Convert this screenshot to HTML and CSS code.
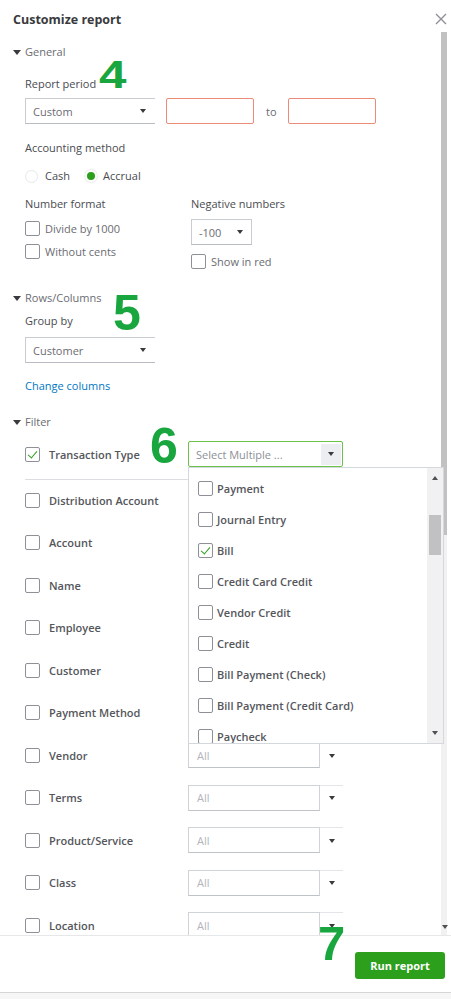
FILE: index.html
```html
<!DOCTYPE html>
<html lang="en">
<head>
  <meta charset="UTF-8" />
  <meta name="viewport" content="width=device-width, initial-scale=1.0" />
  <title>Customize report</title>
  <link rel="stylesheet" href="styles.css">
</head>
<body>
  <div class="panel">
    <header class="panel-head">
      <h1>Customize report</h1>
      <svg class="close" width="12" height="12" viewBox="0 0 12 12"><path d="M1 1 L11 11 M11 1 L1 11" stroke="#8d9096" stroke-width="1.4" fill="none"/></svg>
    </header>

    <div class="panel-body">
      <div class="content">
        <div class="sec-head"><i class="tri"></i>General</div>
        <div class="indent">
          <div class="lbl gap-18">Report period</div>
          <div class="period-row">
            <div class="select select-open w-130"><span>Custom</span><i class="caret"></i></div>
            <div class="date"></div>
            <span class="to">to</span>
            <div class="date"></div>
          </div>

          <div class="lbl gap-17">Accounting method</div>
          <div class="radios">
            <label class="radio"><i class="dot"></i>Cash</label>
            <label class="radio on"><i class="dot"></i>Accrual</label>
          </div>

          <div class="formats">
            <div class="fmt-col">
              <div class="lbl">Number format</div>
              <label class="check mt-10"><i class="box"></i>Divide by 1000</label>
              <label class="check mt-8"><i class="box"></i>Without cents</label>
            </div>
            <div class="fmt-col">
              <div class="lbl">Negative numbers</div>
              <div class="select neg"><span>-100</span><i class="caret"></i></div>
              <label class="check mt-9"><i class="box"></i>Show in red</label>
            </div>
          </div>
        </div>

        <div class="sec-head gap-22"><i class="tri"></i>Rows/Columns</div>
        <div class="indent">
          <div class="lbl gap-9">Group by</div>
          <div class="select select-open w-130 mt-9"><span>Customer</span><i class="caret"></i></div>
          <a class="link" href="#">Change columns</a>
        </div>

        <div class="sec-head gap-22"><i class="tri"></i>Filter</div>
        <div class="indent">
          <div class="filters">
            <div class="frow">
              <label class="fcheck"><i class="box on"></i>Transaction Type</label>
              <div class="multi">
                <div class="multi-field"><span>Select Multiple ...</span><b class="multi-btn"><i class="caret"></i></b></div>
                <div class="dropdown">
                  <ul class="dd-list">
                    <li><i class="box"></i>Payment</li>
                    <li><i class="box"></i>Journal Entry</li>
                    <li><i class="box on"></i>Bill</li>
                    <li><i class="box"></i>Credit Card Credit</li>
                    <li><i class="box"></i>Vendor Credit</li>
                    <li><i class="box"></i>Credit</li>
                    <li><i class="box"></i>Bill Payment (Check)</li>
                    <li><i class="box"></i>Bill Payment (Credit Card)</li>
                    <li><i class="box"></i>Paycheck</li>
                  </ul>
                  <div class="dd-bar">
                    <i class="arr-up"></i>
                    <i class="dd-thumb"></i>
                    <i class="arr-down"></i>
                  </div>
                </div>
              </div>
            </div>
            <hr class="sep">
            <div class="rows">
              <div class="frow"><label class="fcheck"><i class="box"></i>Distribution Account</label><div class="all"><span>All</span><b><i class="caret"></i></b></div></div>
              <div class="frow"><label class="fcheck"><i class="box"></i>Account</label><div class="all"><span>All</span><b><i class="caret"></i></b></div></div>
              <div class="frow"><label class="fcheck"><i class="box"></i>Name</label><div class="all"><span>All</span><b><i class="caret"></i></b></div></div>
              <div class="frow"><label class="fcheck"><i class="box"></i>Employee</label><div class="all"><span>All</span><b><i class="caret"></i></b></div></div>
              <div class="frow"><label class="fcheck"><i class="box"></i>Customer</label><div class="all"><span>All</span><b><i class="caret"></i></b></div></div>
              <div class="frow"><label class="fcheck"><i class="box"></i>Payment Method</label><div class="all"><span>All</span><b><i class="caret"></i></b></div></div>
              <div class="frow"><label class="fcheck"><i class="box"></i>Vendor</label><div class="all"><span>All</span><b><i class="caret"></i></b></div></div>
              <div class="frow"><label class="fcheck"><i class="box"></i>Terms</label><div class="all"><span>All</span><b><i class="caret"></i></b></div></div>
              <div class="frow"><label class="fcheck"><i class="box"></i>Product/Service</label><div class="all"><span>All</span><b><i class="caret"></i></b></div></div>
              <div class="frow"><label class="fcheck"><i class="box"></i>Class</label><div class="all"><span>All</span><b><i class="caret"></i></b></div></div>
              <div class="frow"><label class="fcheck"><i class="box"></i>Location</label><div class="all"><span>All</span><b><i class="caret"></i></b></div></div>
            </div>
          </div>
        </div>
      </div>

      <div class="vbar"><i class="vthumb"></i><i class="arr-down"></i></div>
    </div>

    <footer class="panel-foot">
      <button class="run">Run report</button>
    </footer>

    <!-- step annotations drawn over the screenshot -->
    <span class="mark mark-4">4</span>
    <span class="mark mark-5">5</span>
    <span class="mark mark-6">6</span>
    <span class="mark mark-7">7</span>
  </div>
</body>
</html>
```

FILE: styles.css
```css
* {
  box-sizing: border-box;
}

body {
  margin: 0;
  background-color: #f6f6f6;
  font-family: 'Open Sans', sans-serif;
  font-size: 11px;
  color: #393a3d;
}

.panel {
  position: relative;
  width: 451px;
  height: 993px;
  background-color: #ffffff;
  border-bottom: 1px solid #d6d6d6;
}

/* header */
.panel-head {
  display: flex;
  justify-content: space-between;
  height: 32px;
  padding: 12px 4px 0 13px;
}

.panel-head h1 {
  margin: 0;
  font-size: 12.5px;
  line-height: 16px;
  font-weight: 700;
  color: #393a3d;
}

.close {
  margin-top: 1px;
}

/* body + scroll */
.panel-body {
  display: flex;
  height: 903px;
  overflow: hidden;
}

.content {
  flex: 1;
  padding-left: 13px;
}

.vbar {
  position: relative;
  width: 6px;
  margin-right: 4px;
  background-color: #f1f1f1;
}

.vthumb {
  display: block;
  height: 503px;
  background-color: #c1c1c1;
}

.vbar .arr-down {
  position: absolute;
  bottom: 6px;
  left: 1px;
}

/* sections */
.sec-head {
  display: flex;
  align-items: center;
  margin-top: 13px;
  line-height: 14px;
  color: #6b6c72;
}

.tri {
  width: 0;
  height: 0;
  margin-right: 4px;
  border-left: 4px solid transparent;
  border-right: 4px solid transparent;
  border-top: 5px solid #393a3d;
}

.indent {
  padding-left: 12px;
}

.lbl {
  line-height: 14px;
  color: #4a4b50;
}

.gap-9 { margin-top: 9px; }
.gap-17 { margin-top: 17px; }
.gap-18 { margin-top: 18px; }
.gap-22 { margin-top: 22px; }
.mt-8 { margin-top: 8px; }
.mt-9 { margin-top: 9px; }
.mt-10 { margin-top: 10px; }

/* selects */
.select {
  display: flex;
  align-items: center;
  justify-content: space-between;
  height: 26px;
  padding: 0 6px 0 7px;
  border: 1px solid #c9ccd1;
  border-bottom-color: #b9bcc2;
  color: #6b6c72;
}

.select-open {
  border-right: none;
  padding-right: 9px;
}

.w-130 {
  width: 130px;
}

.caret {
  width: 0;
  height: 0;
  border-left: 3.5px solid transparent;
  border-right: 3.5px solid transparent;
  border-top: 4px solid #393a3d;
}

.period-row {
  display: flex;
  align-items: center;
  margin-top: 7px;
}

.date {
  width: 88px;
  height: 26px;
  margin-left: 11px;
  border: 1.5px solid #ec8b78;
  border-radius: 2px;
}

.to {
  margin-left: 12px;
  color: #6b6c72;
}

/* radios */
.radios {
  display: flex;
  margin-top: 14px;
  line-height: 14px;
}

.radio {
  display: flex;
  align-items: center;
  color: #4a4b50;
}

.radio .dot {
  width: 13px;
  height: 13px;
  margin-right: 7px;
  border: 1px solid #e7e8ea;
  border-radius: 50%;
}

.radio.on {
  margin-left: 15px;
}

.radio.on .dot {
  width: 12px;
  height: 12px;
  margin-right: 6px;
  border: 2px solid #ffffff;
  background-color: #2ca01c;
  box-shadow: 0 0 0 1px #eeeeee;
}

/* number formats */
.formats {
  display: flex;
  margin-top: 14px;
}

.fmt-col {
  display: flex;
  flex-direction: column;
  align-items: flex-start;
  width: 166px;
}

.check {
  display: flex;
  align-items: center;
  gap: 5px;
  line-height: 15px;
  color: #6b6c72;
}

.box {
  position: relative;
  flex: none;
  width: 15px;
  height: 15px;
  border: 1px solid #8d9096;
  border-radius: 2px;
  background-color: #ffffff;
}

.box.on::after {
  content: "";
  position: absolute;
  left: 4px;
  top: 1px;
  width: 4px;
  height: 8px;
  border-right: 1.6px solid #2ca01c;
  border-bottom: 1.6px solid #2ca01c;
  transform: rotate(40deg);
}

.neg {
  width: 61px;
  margin-top: 8px;
  padding-right: 8px;
}

.link {
  display: block;
  margin-top: 16px;
  line-height: 14px;
  color: #0077c5;
  text-decoration: none;
}

/* filters */
.filters {
  margin-top: 12px;
}

.frow {
  display: grid;
  grid-template-columns: 163px 155px;
  align-items: center;
  height: 26px;
}

.fcheck {
  display: flex;
  align-items: center;
  gap: 9px;
  font-weight: 600;
  color: #55565b;
}

.multi {
  position: relative;
  z-index: 2;
}

.multi-field {
  display: flex;
  align-items: center;
  justify-content: space-between;
  height: 26px;
  padding: 0 1px 0 7px;
  border: 1.5px solid #6cc24a;
  border-radius: 2px;
  color: #8d9096;
}

.multi-btn {
  display: flex;
  align-items: center;
  justify-content: center;
  width: 20px;
  height: 21px;
  background-color: #eceef1;
}

.dropdown {
  position: absolute;
  top: 100%;
  left: 0;
  display: flex;
  width: 256px;
  height: 277px;
  border: 1px solid #d4d7dc;
  background-color: #ffffff;
  overflow: hidden;
}

.dd-list {
  flex: 1;
  margin: 0;
  padding: 5px 0 0 9px;
  list-style: none;
}

.dd-list li {
  display: flex;
  align-items: center;
  gap: 4px;
  height: 31px;
  font-weight: 600;
  color: #55565b;
}

.dd-bar {
  position: relative;
  width: 16px;
  background-color: #f1f1f1;
}

.arr-up,
.arr-down {
  position: absolute;
  left: 5px;
  width: 0;
  height: 0;
  border-left: 3.5px solid transparent;
  border-right: 3.5px solid transparent;
}

.arr-up {
  top: 8px;
  border-bottom: 4px solid #505050;
}

.arr-down {
  bottom: 8px;
  border-top: 4px solid #505050;
}

.dd-thumb {
  position: absolute;
  top: 47px;
  left: 2px;
  width: 12px;
  height: 40px;
  background-color: #c1c1c1;
}

.sep {
  height: 1px;
  margin: 12px 0 7px;
  width: 163px;
  border: none;
  background-color: #dcdde0;
}

.rows {
  display: grid;
  row-gap: 16.5px;
}

.all {
  display: flex;
  height: 26px;
}

.all span {
  display: flex;
  align-items: center;
  width: 132px;
  padding-left: 8px;
  border: 1px solid #d0d3d8;
  border-bottom-color: #bfc2c7;
  color: #b3b5ba;
}

.all b {
  display: flex;
  align-items: center;
  justify-content: center;
  width: 23px;
  border-top: 1px solid #e3e5e8;
}

/* footer */
.panel-foot {
  display: flex;
  justify-content: flex-end;
  height: 57px;
  padding: 16px 6px 0 0;
  border-top: 1px solid #e6e7e9;
}

.run {
  width: 90px;
  height: 27px;
  border: none;
  border-radius: 3px;
  background-color: #2ca01c;
  color: #ffffff;
  font-family: 'Open Sans', sans-serif;
  font-size: 11px;
  font-weight: 700;
}

/* green step numbers */
.mark {
  position: absolute;
  font-family: 'Liberation Sans', Arial, sans-serif;
  font-weight: 700;
  line-height: 1;
  color: #19a63f;
}

.mark-4 {
  left: 99px;
  top: 56px;
  font-size: 38px;
  transform: scaleX(1.3);
  transform-origin: left top;
}

.mark-5 {
  left: 113px;
  top: 288px;
  font-size: 50px;
}

.mark-6 {
  left: 150px;
  top: 421px;
  font-size: 50px;
}

.mark-7 {
  left: 318px;
  top: 919px;
  font-size: 49px;
}
```
